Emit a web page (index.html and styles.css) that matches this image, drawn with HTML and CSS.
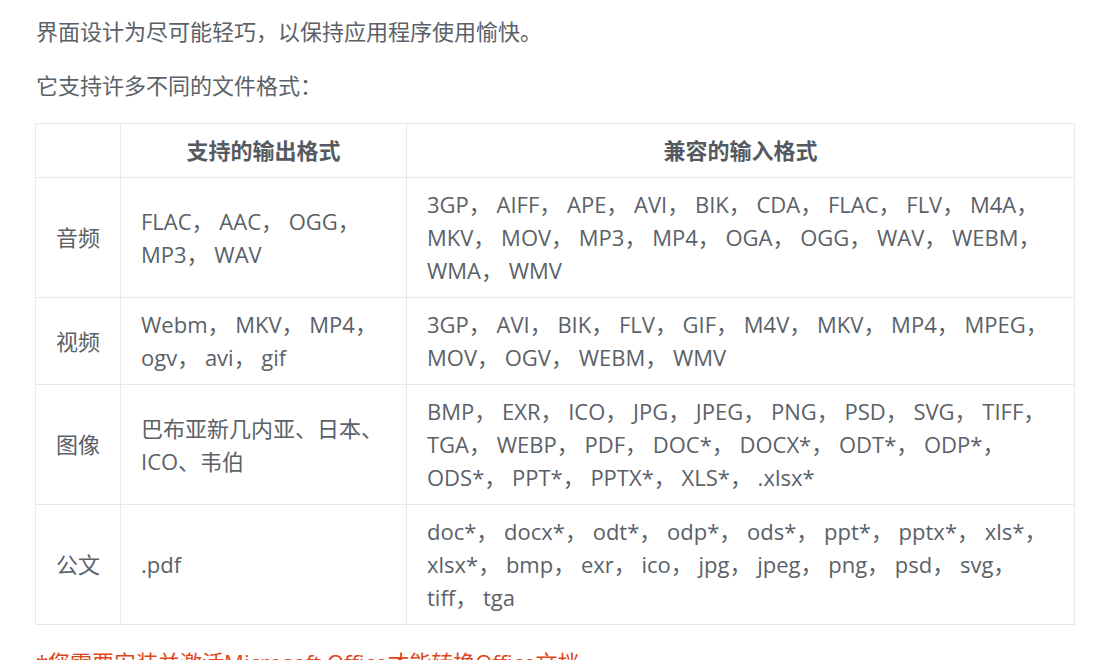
FILE: index.html
```html
<!DOCTYPE html>
<html lang="zh">
<head>
<meta charset="utf-8">
<link rel="stylesheet" href="styles.css">
</head>
<body>
<div class="content">
  <p>界面设计为尽可能轻巧，以保持应用程序使用愉快。</p>
  <p>它支持许多不同的文件格式：</p>
  <table class="formats">
    <colgroup>
      <col class="c1"><col class="c2"><col class="c3">
    </colgroup>
    <thead>
      <tr><th></th><th>支持的输出格式</th><th>兼容的输入格式</th></tr>
    </thead>
    <tbody>
      <tr>
        <td>音频</td>
        <td>FLAC， AAC， OGG， MP3， WAV</td>
        <td class="narrow">3GP， AIFF， APE， AVI， BIK， CDA， FLAC， FLV， M4A， MKV， MOV， MP3， MP4， OGA， OGG， WAV， WEBM， WMA， WMV</td>
      </tr>
      <tr>
        <td>视频</td>
        <td>Webm， MKV， MP4， ogv， avi， gif</td>
        <td class="narrow">3GP， AVI， BIK， FLV， GIF， M4V， MKV， MP4， MPEG， MOV， OGV， WEBM， WMV</td>
      </tr>
      <tr>
        <td>图像</td>
        <td>巴布亚新几内亚、日本、ICO、韦伯</td>
        <td class="narrow">BMP， EXR， ICO， JPG， JPEG， PNG， PSD， SVG， TIFF， TGA， WEBP， PDF， DOC*， DOCX*， ODT*， ODP*， ODS*， PPT*， PPTX*， XLS*， .xlsx*</td>
      </tr>
      <tr>
        <td>公文</td>
        <td>.pdf</td>
        <td class="narrow">doc*， docx*， odt*， odp*， ods*， ppt*， pptx*， xls*， xlsx*， bmp， exr， ico， jpg， jpeg， png， psd， svg， tiff， tga</td>
      </tr>
    </tbody>
  </table>
  <p class="note">*您需要安装并激活Microsoft Office才能转换Office文档</p>
</div>
</body>
</html>
```

FILE: styles.css
```css
html, body {
  margin: 0;
  padding: 0;
  background: #ffffff;
}
body {
  font-family: "Open Sans", "Noto Sans CJK SC", sans-serif;
  font-size: 22px;
  line-height: 33px;
  color: #5b6168;
}
.content {
  padding: 15px 42px 0 36px;
}
p {
  margin: 0 0 21px 0;
}
.formats {
  border-collapse: collapse;
  width: 1040px;
  margin: 0 0 21px -1px;
  table-layout: fixed;
}
.c1 { width: 85px; }
.c2 { width: 286px; }
.formats th, .formats td {
  border: 1px solid #e9e9e9;
  padding: 10px 20px;
  vertical-align: middle;
  text-align: left;
}
.formats th {
  text-align: center;
  font-weight: 700;
  color: #555a60;
}
.narrow {
  font-family: "Liberation Sans Narrow", "Open Sans", "Noto Sans CJK SC", sans-serif;
}
.note {
  color: #e0461c;
}
```
